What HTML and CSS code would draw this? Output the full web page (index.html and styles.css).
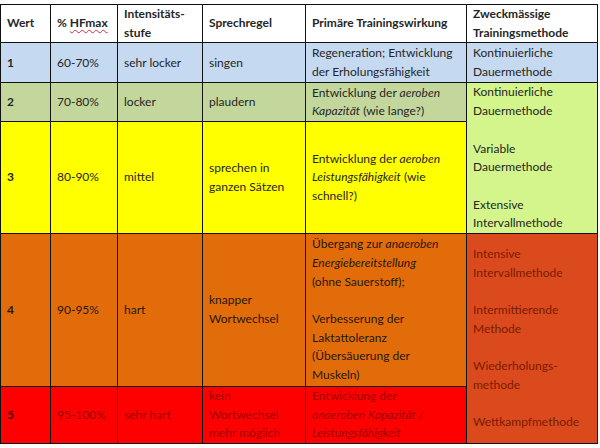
FILE: index.html
```html
<!DOCTYPE html>
<html lang="de">
<head>
<meta charset="utf-8">
<title>Trainingsbereiche</title>
<link rel="stylesheet" href="styles.css">
</head>
<body>
<table class="zones">
  <colgroup>
    <col class="c1"><col class="c2"><col class="c3"><col class="c4"><col class="c5"><col class="c6">
  </colgroup>
  <tr class="head">
    <th>Wert</th>
    <th>% <span class="spell">HFmax</span></th>
    <th>Intensitäts-<br>stufe</th>
    <th>Sprechregel</th>
    <th>Primäre Trainingswirkung</th>
    <th>Zweckmässige<br>Trainingsmethode</th>
  </tr>
  <tr class="r1">
    <td class="num">1</td>
    <td>60-70%</td>
    <td>sehr locker</td>
    <td>singen</td>
    <td>Regeneration; Entwicklung<br>der Erholungsfähigkeit</td>
    <td>Kontinuierliche<br>Dauermethode</td>
  </tr>
  <tr class="r2">
    <td class="num">2</td>
    <td>70-80%</td>
    <td>locker</td>
    <td>plaudern</td>
    <td>Entwicklung der <em>aeroben</em><br><em>Kapazität</em> (wie lange?)</td>
    <td rowspan="2" class="m23">Kontinuierliche<br>Dauermethode<br><br>Variable<br>Dauermethode<br><br>Extensive<br>Intervallmethode</td>
  </tr>
  <tr class="r3">
    <td class="num">3</td>
    <td>80-90%</td>
    <td>mittel</td>
    <td>sprechen in<br>ganzen Sätzen</td>
    <td>Entwicklung der <em>aeroben</em><br><em>Leistungsfähigkeit</em> (wie<br>schnell?)</td>
  </tr>
  <tr class="r4">
    <td class="num">4</td>
    <td>90-95%</td>
    <td>hart</td>
    <td>knapper<br>Wortwechsel</td>
    <td>Übergang zur <em>anaeroben</em><br><em>Energiebereitstellung</em><br>(ohne Sauerstoff);<br><br>Verbesserung der<br>Laktattoleranz<br>(Übersäuerung der<br>Muskeln)</td>
    <td rowspan="2" class="m45">Intensive<br>Intervallmethode<br><br>Intermittierende<br>Methode<br><br>Wiederholungs-<br>methode<br><br>Wettkampfmethode</td>
  </tr>
  <tr class="r5">
    <td class="num">5</td>
    <td>95-100%</td>
    <td>sehr hart</td>
    <td>kein<br>Wortwechsel<br>mehr möglich</td>
    <td>Entwicklung der<br><em>anaeroben Kapazität /</em><br><em>Leistungsfähigkeit</em></td>
  </tr>
</table>
</body>
</html>
```
FILE: styles.css
```css
html, body {
  margin: 0;
  padding: 0;
  background: #ffffff;
}
body {
  padding-top: 4px;
  font-family: Lato, "Open Sans", sans-serif;
  font-size: 12px;
  line-height: 18.7px;
  color: #262626;
}
.zones {
  border-collapse: collapse;
  table-layout: fixed;
  width: 598px;
}
.c1 { width: 50px; }
.c2 { width: 67px; }
.c3 { width: 85px; }
.c4 { width: 103px; }
.c5 { width: 161px; }
.c6 { width: 131px; }
.zones th,
.zones td {
  border: 1px solid #111111;
  padding: 0 2px 0 6px;
  text-align: left;
  vertical-align: middle;
  white-space: nowrap;
  overflow: hidden;
}
.zones th {
  font-weight: 700;
  background: #ffffff;
}
.spell {
  text-decoration: underline wavy #d03030;
  text-decoration-thickness: 1px;
  text-underline-offset: 2px;
}
.num { font-weight: 700; }
em { font-style: italic; }
.head { height: 37px; }
.r1 { height: 40px; background: #c5d9f1; }
.r2 { height: 38px; background: #c3d69b; }
.r3 { height: 111px; background: #ffff00; }
.r4 { height: 153px; background: #e36c0a; color: #24180c; }
.r5 { height: 56px; background: #ff0000; color: #a00000; }
.r5 .num { color: #5a0000; }
.zones td.m23 { background: #d3f58c; color: #262626; }
.zones td.m45 { background: #da4a1c; color: #7a1a04; }
```
